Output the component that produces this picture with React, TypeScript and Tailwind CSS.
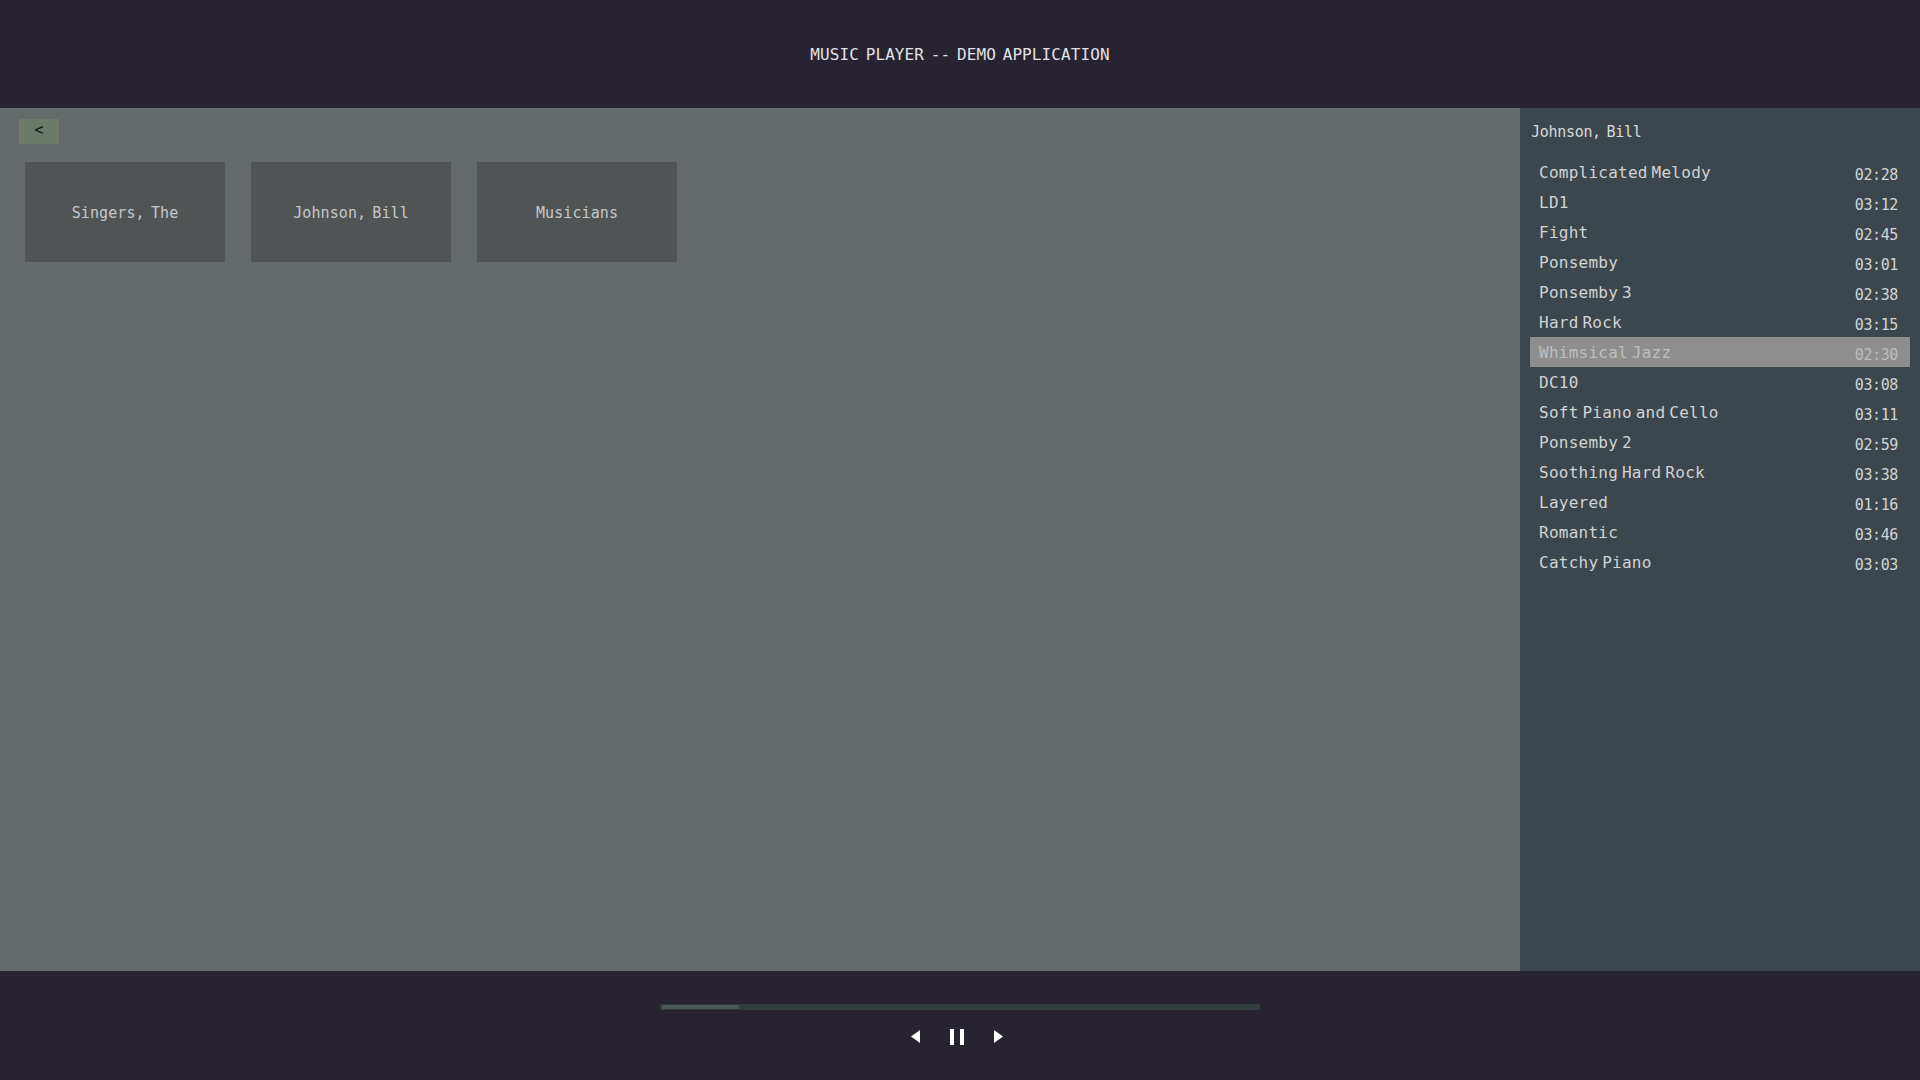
const artists = ["Singers, The", "Johnson, Bill", "Musicians"];

const tracks = [
  { name: "Complicated Melody", time: "02:28" },
  { name: "LD1", time: "03:12" },
  { name: "Fight", time: "02:45" },
  { name: "Ponsemby", time: "03:01" },
  { name: "Ponsemby 3", time: "02:38" },
  { name: "Hard Rock", time: "03:15" },
  { name: "Whimsical Jazz", time: "02:30" },
  { name: "DC10", time: "03:08" },
  { name: "Soft Piano and Cello", time: "03:11" },
  { name: "Ponsemby 2", time: "02:59" },
  { name: "Soothing Hard Rock", time: "03:38" },
  { name: "Layered", time: "01:16" },
  { name: "Romantic", time: "03:46" },
  { name: "Catchy Piano", time: "03:03" },
];

const current = "Whimsical Jazz";
const progress = 13;

function TrackRow({ name, time }: { name: string; time: string }) {
  const active = name === current;
  return (
    <div
      className={`h-[30px] flex items-start justify-between pl-[9px] pr-[12px] pt-[1px] ${
        active ? "bg-[#8e8e8e] text-[#bdbdbd]" : "text-[#d2d3d4]"
      }`}
    >
      <span className="text-[16px] leading-[30px] tracking-[0.25px] [word-spacing:-6px]">{name}</span>
      <span className="text-[15px] leading-[30px] tracking-[-0.4px] pt-[2px]">{time}</span>
    </div>
  );
}

export default function App() {
  return (
    <div className="h-screen w-full flex flex-col overflow-hidden font-['DejaVu_Sans_Mono','Liberation_Mono',monospace]">
      {/* Header */}
      <header className="h-[108px] shrink-0 bg-[#282331] flex items-center justify-center pt-[1px]">
        <h1 className="text-[16px] tracking-[0.1px] [word-spacing:-3px] text-[#e2e2e6] font-normal">
          MUSIC PLAYER -- DEMO APPLICATION
        </h1>
      </header>

      {/* Body */}
      <div className="flex-1 flex min-h-0">
        <main className="flex-1 bg-[#656a6b] pt-[11px] pl-[19px]">
          <button className="w-[40px] h-[25px] bg-[#6b7b6b] text-[#141414] text-[15px] leading-none flex items-center justify-center pb-[3px]">
            &lt;
          </button>
          <div className="mt-[18px] pl-[6px] flex gap-[26px]">
            {artists.map((a) => (
              <div
                key={a}
                className="w-[200px] h-[100px] bg-[#505455] flex items-center justify-center pt-[2px] text-[15px] tracking-[0.1px] [word-spacing:-3px] text-[#c6c8c8]"
              >
                {a}
              </div>
            ))}
          </div>
        </main>

        <aside className="w-[400px] shrink-0 bg-[#3c474d] pt-[14px] px-[10px]">
          <div className="h-[20px] pl-[1px] text-[15px] leading-[20px] tracking-[-0.3px] [word-spacing:-3px] text-[#d8d9da]">
            Johnson, Bill
          </div>
          <div className="mt-[15px]">
            {tracks.map((t) => (
              <TrackRow key={t.name} name={t.name} time={t.time} />
            ))}
          </div>
        </aside>
      </div>

      {/* Player */}
      <footer className="h-[109px] shrink-0 bg-[#282331] flex flex-col items-center pt-[33px]">
        <div className="w-[600px] h-[6px] bg-[#313e3d] py-[1px] px-[2px]">
          <div className="h-full bg-[#4a5754]" style={{ width: `${progress}%` }} />
        </div>
        <div className="mt-[19px] mr-[6px] flex items-start gap-[30px]">
          <svg width="9" height="13" viewBox="0 0 9 13" className="mt-[1px]">
            <polygon points="9,0 9,13 0,6.5" fill="#ffffff" />
          </svg>
          <div className="flex gap-[6px]">
            <div className="w-[4px] h-[16px] bg-white" />
            <div className="w-[4px] h-[16px] bg-white" />
          </div>
          <svg width="9" height="13" viewBox="0 0 9 13" className="mt-[1px]">
            <polygon points="0,0 0,13 9,6.5" fill="#ffffff" />
          </svg>
        </div>
      </footer>
    </div>
  );
}
